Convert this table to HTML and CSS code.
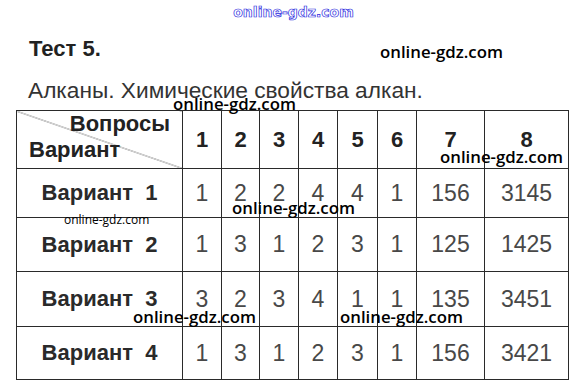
FILE: index.html
```html
<!DOCTYPE html>
<html lang="ru">
<head>
<meta charset="utf-8">
<title>Тест 5</title>
<link rel="stylesheet" href="styles.css">
</head>
<body>
<div class="page">
  <div class="wm-top">online-gdz.com</div>
  <h1 class="title">Тест 5.</h1>
  <p class="subtitle">Алканы. Химические свойства алкан.</p>
  <table class="grid">
    <colgroup>
      <col class="c-head"><col class="c-s1"><col class="c-s2"><col class="c-s1"><col class="c-s1"><col class="c-s3"><col class="c-s1"><col class="c-w1"><col class="c-w2">
    </colgroup>
    <tr class="r-head">
      <th class="diag"><div class="dq">Вопросы</div><div class="dv">Вариант</div></th>
      <th>1</th><th>2</th><th>3</th><th>4</th><th>5</th><th>6</th><th>7</th><th>8</th>
    </tr>
    <tr class="r1">
      <th class="lbl">Вариант&nbsp; 1</th>
      <td>1</td><td>2</td><td>2</td><td>4</td><td>4</td><td>1</td><td>156</td><td>3145</td>
    </tr>
    <tr class="r2">
      <th class="lbl">Вариант&nbsp; 2</th>
      <td>1</td><td>3</td><td>1</td><td>2</td><td>3</td><td>1</td><td>125</td><td>1425</td>
    </tr>
    <tr class="r3">
      <th class="lbl">Вариант&nbsp; 3</th>
      <td>3</td><td>2</td><td>3</td><td>4</td><td>1</td><td>1</td><td>135</td><td>3451</td>
    </tr>
    <tr class="r4">
      <th class="lbl">Вариант&nbsp; 4</th>
      <td>1</td><td>3</td><td>1</td><td>2</td><td>3</td><td>1</td><td>156</td><td>3421</td>
    </tr>
  </table>

  <span class="wm wm-1">online-gdz.com</span>
  <span class="wm wm-2">online-gdz.com</span>
  <span class="wm wm-3">online-gdz.com</span>
  <span class="wm wm-4">online-gdz.com</span>
  <span class="wm wm-small">online-gdz.com</span>
  <span class="wm wm-6">online-gdz.com</span>
  <span class="wm wm-7">online-gdz.com</span>
</div>
</body>
</html>
```
FILE: styles.css
```css
html, body {
  margin: 0;
  padding: 0;
  background: #fff;
}

.page {
  position: relative;
  width: 587px;
  height: 386px;
  padding-top: 2px;
  box-sizing: border-box;
  font-family: "Liberation Sans", Arial, sans-serif;
  color: #222;
  overflow: hidden;
}

.wm-top {
  font-family: "DejaVu Sans", sans-serif;
  font-weight: bold;
  font-size: 14px;
  line-height: 20px;
  text-align: center;
  color: #fff;
  -webkit-text-stroke: 0.7px #2b2be0;
}

.title {
  margin: 14px 0 0 29px;
  font-size: 22px;
  line-height: 26px;
  font-weight: bold;
  color: #222;
}

.subtitle {
  margin: 15px 0 0 28px;
  font-size: 22.7px;
  line-height: 26px;
  font-weight: normal;
  color: #333;
}

.grid {
  margin: 7px 0 0 16px;
  border-collapse: collapse;
  table-layout: fixed;
  width: 552px;
}

.c-head { width: 166px; }
.c-s1 { width: 39px; }
.c-s2 { width: 38px; }
.c-s3 { width: 40px; }
.c-w1 { width: 68px; }
.c-w2 { width: 84px; }

.grid th,
.grid td {
  border: 1px solid #2a2a2a;
  padding: 0;
  text-align: center;
  vertical-align: middle;
}

.grid th {
  font-size: 22px;
  font-weight: bold;
  color: #222;
}

.grid td {
  font-size: 23px;
  font-weight: normal;
  color: #484848;
}

.r-head th { height: 57px; }
.r1 > * { height: 48px; }
.r2 > * { height: 53px; }
.r3 > * { height: 54px; }
.r4 > * { height: 52px; }

.grid th.diag {
  vertical-align: top;
  text-align: left;
  background: linear-gradient(to top right, transparent calc(50% - 0.6px), #666 50%, transparent calc(50% + 0.6px));
}

.dq {
  line-height: 26px;
  text-align: right;
  padding-right: 12px;
}

.dv {
  line-height: 26px;
  padding-left: 12px;
}

.grid th.lbl {
  color: #2a2a2a;
  white-space: pre;
}

.wm {
  position: absolute;
  font-family: "Open Sans", sans-serif;
  font-weight: 600;
  font-size: 16.8px;
  line-height: 20px;
  color: #000;
  white-space: nowrap;
}

.wm-1 { left: 380px; top: 42px; }
.wm-2 { left: 173px; top: 94px; }
.wm-3 { left: 440px; top: 147px; }
.wm-4 { left: 232px; top: 198px; }
.wm-6 { left: 133px; top: 307px; }
.wm-7 { left: 340px; top: 307px; }

.wm-small {
  left: 64px;
  top: 212px;
  font-size: 12px;
  line-height: 15px;
  font-weight: 500;
}
```
